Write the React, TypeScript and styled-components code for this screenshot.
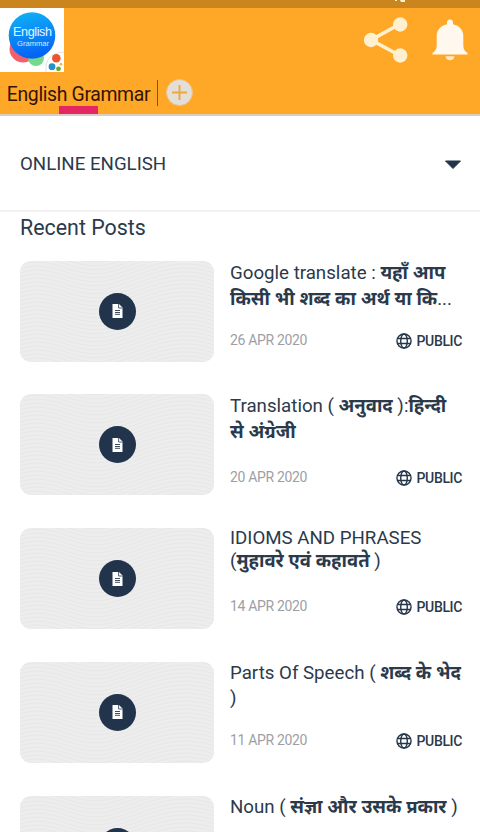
import React from "react";
import styled, { createGlobalStyle } from "styled-components";

type TitlePart = { text: string; hindi?: boolean };

type Post = {
  lines: TitlePart[][];
  lineHeight: number;
  metaGap: number;
  date?: string;
};

const posts: Post[] = [
  {
    lines: [
      [{ text: "Google translate : " }, { text: "यहाँ आप", hindi: true }],
      [{ text: "किसी भी शब्द का अर्थ या कि", hindi: true }, { text: "..." }],
    ],
    lineHeight: 26,
    metaGap: 18,
    date: "26 APR 2020",
  },
  {
    lines: [
      [
        { text: "Translation ( " },
        { text: "अनुवाद", hindi: true },
        { text: " ):" },
        { text: "हिन्दी", hindi: true },
      ],
      [{ text: "से अंग्रेजी", hindi: true }],
    ],
    lineHeight: 26,
    metaGap: 22,
    date: "20 APR 2020",
  },
  {
    lines: [
      [{ text: "IDIOMS AND PHRASES" }],
      [
        { text: "(" },
        { text: "मुहावरे एवं कहावते", hindi: true },
        { text: " )" },
      ],
    ],
    lineHeight: 23,
    metaGap: 23,
    date: "14 APR 2020",
  },
  {
    lines: [
      [{ text: "Parts Of Speech ( " }, { text: "शब्द के भेद", hindi: true }],
      [{ text: ")" }],
    ],
    lineHeight: 25,
    metaGap: 19,
    date: "11 APR 2020",
  },
  {
    lines: [
      [
        { text: "Noun ( " },
        { text: "संज्ञा और उसके प्रकार", hindi: true },
        { text: " )" },
      ],
    ],
    lineHeight: 25,
    metaGap: 20,
  },
];

const GlobalStyle = createGlobalStyle`
  * {
    box-sizing: border-box;
  }
  body {
    margin: 0;
    background: #fff;
    font-family: Roboto, "Noto Sans", sans-serif;
    color: #2b3a4b;
  }
  svg {
    display: block;
  }
`;

const Screen = styled.div`
  width: 480px;
  height: 832px;
  overflow: hidden;
  background: #fff;
`;

const StatusBar = styled.div`
  height: 8px;
  background: #ca851f;
  display: flex;
  justify-content: flex-end;
  padding-right: 74px;
`;

const Header = styled.header`
  height: 108px;
  background: #ffa726;
  border-bottom: 2px solid #d9cdc5;
  display: flex;
  flex-direction: column;
`;

const Toolbar = styled.div`
  height: 64px;
  display: flex;
  justify-content: space-between;
`;

const Actions = styled.div`
  display: flex;
  gap: 23px;
  padding: 8px 12px 0 0;
`;

const Tabs = styled.div`
  flex: 1;
  display: flex;
  align-items: flex-start;
  padding: 7px 0 0 7px;
`;

const Tab = styled.div`
  width: 143px;
  height: 35px;
  display: flex;
  flex-direction: column;
  align-items: center;
  justify-content: space-between;
  font-size: 19.4px;
  line-height: 31px;
  letter-spacing: -0.35px;
  color: #331408;
  white-space: nowrap;
`;

const TabMarker = styled.div`
  flex: none;
  width: 39px;
  height: 8px;
  margin-top: -4px;
  background: #e22762;
`;

const Divider = styled.div`
  width: 1px;
  height: 26px;
  margin: 1px 8px 0 7px;
  background: #795219;
`;

const AddButton = styled.button`
  width: 27px;
  height: 27px;
  padding: 0;
  border: 1px solid #eec287;
  border-radius: 50%;
  background: #e3ded8;
  display: flex;
  align-items: center;
  justify-content: center;
`;

const Dropdown = styled.div`
  height: 96px;
  padding: 1px 18px 0 20px;
  border-bottom: 2px solid #f3f0f1;
  display: flex;
  align-items: center;
  justify-content: space-between;
  font-size: 18.7px;
`;

const SectionTitle = styled.h2`
  margin: 0;
  height: 48.6px;
  padding: 2px 20px 0;
  font-size: 21.4px;
  font-weight: 400;
  line-height: 28px;
`;

const PostItem = styled.article`
  height: 133.75px;
  padding: 0 18px 0 20px;
  display: flex;
  gap: 16px;
`;

const Thumb = styled.div`
  flex: none;
  width: 194px;
  height: 101px;
  border-radius: 11px;
  overflow: hidden;
  background: #ededed;
  display: grid;
  place-items: center;

  > * {
    grid-area: 1 / 1;
  }
`;

const DocBadge = styled.div`
  width: 37px;
  height: 37px;
  border-radius: 50%;
  background: #21344c;
  display: flex;
  align-items: center;
  justify-content: center;
`;

const PostText = styled.div`
  flex: 1;
  min-width: 0;
`;

const Title = styled.h3<{ $lineHeight: number }>`
  margin: -1px 0 0;
  height: ${({ $lineHeight }) => $lineHeight * 2}px;
  font-size: 18.7px;
  font-weight: 400;
  line-height: ${({ $lineHeight }) => $lineHeight}px;
`;

const TitleLine = styled.div<{ $lineHeight: number }>`
  height: ${({ $lineHeight }) => $lineHeight}px;
  white-space: pre;
`;

const Hindi = styled.span`
  font-family: "Noto Sans", "Noto Sans Devanagari", sans-serif;
  font-size: 18.5px;
  font-weight: 700;
  line-height: 1;
`;

const Meta = styled.div<{ $gap: number }>`
  margin-top: ${({ $gap }) => $gap}px;
  display: flex;
  justify-content: space-between;
  line-height: 20px;
`;

const PostDate = styled.time`
  font-size: 14px;
  letter-spacing: -0.33px;
  color: #9c9fa5;
`;

const Visibility = styled.div`
  display: flex;
  align-items: center;
  gap: 5px;
  margin-top: 1px;
  height: 20px;
  font-size: 14px;
  font-weight: 500;
  letter-spacing: -0.35px;
`;

const Logo = () => (
  <svg width="64" height="64" viewBox="0 0 64 64">
    <defs>
      <linearGradient id="logoBlue" x1="0" y1="0" x2="0.2" y2="1">
        <stop offset="0" stopColor="#10b5f6" />
        <stop offset="1" stopColor="#0564f5" />
      </linearGradient>
    </defs>
    <rect width="64" height="64" fill="#fff" />
    <circle cx="23" cy="41" r="13.5" fill="#f3606b" />
    <circle cx="36" cy="50" r="8" fill="#75d98a" />
    <circle cx="32" cy="27.5" r="23.3" fill="url(#logoBlue)" />
    <text x="13" y="28" fontSize="12.6" textLength="39" fill="#e5f6ff" fontFamily="Liberation Sans, sans-serif">
      English
    </text>
    <text x="17" y="38" fontSize="7.6" textLength="32" fill="#d5ebff" fontFamily="Liberation Sans, sans-serif">
      Grammar
    </text>
    <path d="M46 64C45 51 51 45 64 44V64z" fill="#fff" />
    <path d="M46 64C45 51 51 45 64 44" fill="none" stroke="#d5dbe0" strokeWidth="0.8" />
    <circle cx="56.3" cy="50.3" r="4.3" fill="#ea552b" />
    <circle cx="52" cy="58.7" r="3.4" fill="#288fc8" />
    <circle cx="58.5" cy="60.8" r="2.4" fill="#62a834" />
    <circle cx="61" cy="56.2" r="1.3" fill="#e9b43a" />
  </svg>
);

const ShareIcon = () => (
  <svg width="46" height="48" viewBox="0 0 46 48" fill="#fff0cf">
    <path d="M37 8L8 24L37 39.5" fill="none" stroke="#fff0cf" strokeWidth="3.6" />
    <circle cx="37.2" cy="8.5" r="7.2" />
    <circle cx="8" cy="24" r="7.2" />
    <circle cx="37.2" cy="39.5" r="7.2" />
  </svg>
);

const BellIcon = () => (
  <svg width="36" height="48" viewBox="0 0 36 48" fill="#fff8ef">
    <path d="M18 3.500c-1.900 0-3 1.300-3 3v1.700C8.500 9.500 4.700 14 4.700 20v9.500C4.700 33 3.500 34.800.5 37v1.500h35V37c-3-2.200-4.200-4-4.200-7.500V20c0-6-3.800-10.500-10.300-11.800V6.500c0-1.700-1.100-3-3-3z" />
    <path d="M13.500 40.300h9c-.4 2.400-2 4-4.500 4s-4.100-1.600-4.500-4z" fill="#ffeac7" />
  </svg>
);

const PlusIcon = () => (
  <svg width="17" height="17" viewBox="0 0 17 17">
    <path d="M8.500 1v15M1 8.500h15" stroke="#eda83c" strokeWidth="1.900" />
  </svg>
);

const WavePattern = () => (
  <svg width="194" height="101" viewBox="0 0 194 101" fill="none">
    {Array.from({ length: 38 }, (_, i) => {
      const y = i * 4 - 24;
      return (
        <path
          key={i}
          d={`M0 ${y + 8}C35 ${y - 4} 56 ${y + 26} 94 ${y + 14}S155 ${y - 13} 194 ${y}`}
          stroke="#e6e6e6"
          strokeWidth="0.8"
        />
      );
    })}
  </svg>
);

const DocIcon = () => (
  <svg width="11" height="14" viewBox="0 0 11 14">
    <path d="M.5 0H7l3.500 3.500V14H.5z" fill="#fff" />
    <path d="M6.600 0v4h4" fill="none" stroke="#21344c" strokeWidth="0.8" />
    <path d="M3 6.500h5M3 8.500h5M3 10.300h5" stroke="#3d4e62" strokeWidth="1" />
  </svg>
);

const GlobeIcon = () => (
  <svg width="16" height="16" viewBox="0 0 17 17" fill="none" stroke="#26374a" strokeWidth="1.500">
    <circle cx="8.500" cy="8.500" r="7.500" />
    <ellipse cx="8.500" cy="8.500" rx="3.500" ry="7.500" />
    <path d="M1.800 5.800h13.400M1.800 11.200h13.400" />
  </svg>
);

const PostTitle = ({ post }: { post: Post }) => (
  <Title $lineHeight={post.lineHeight}>
    {post.lines.map((line, i) => (
      <TitleLine key={i} $lineHeight={post.lineHeight}>
        {line.map((part, j) =>
          part.hindi ? <Hindi key={j}>{part.text}</Hindi> : part.text
        )}
      </TitleLine>
    ))}
  </Title>
);

export default function App() {
  return (
    <>
      <GlobalStyle />
      <Screen>
        <StatusBar>
          <svg width="12" height="2" viewBox="0 0 12 2">
            <path d="M1 0h2v1H1zM6 0h5v2H7z" fill="#fff0d0" />
          </svg>
        </StatusBar>
        <Header>
          <Toolbar>
            <Logo />
            <Actions>
              <ShareIcon />
              <BellIcon />
            </Actions>
          </Toolbar>
          <Tabs>
            <Tab>
              English Grammar
              <TabMarker />
            </Tab>
            <Divider />
            <AddButton type="button">
              <PlusIcon />
            </AddButton>
          </Tabs>
        </Header>
        <Dropdown>
          ONLINE ENGLISH
          <svg width="18" height="14" viewBox="0 0 18 14">
            <path d="M1.500 4h15L9 11.500z" fill="#21344c" stroke="#21344c" strokeLinejoin="round" />
          </svg>
        </Dropdown>
        <SectionTitle>Recent Posts</SectionTitle>
        {posts.map((post, i) => (
          <PostItem key={i}>
            <Thumb>
              <WavePattern />
              <DocBadge>
                <DocIcon />
              </DocBadge>
            </Thumb>
            <PostText>
              <PostTitle post={post} />
              {post.date && (
                <Meta $gap={post.metaGap}>
                  <PostDate>{post.date}</PostDate>
                  <Visibility>
                    <GlobeIcon />
                    PUBLIC
                  </Visibility>
                </Meta>
              )}
            </PostText>
          </PostItem>
        ))}
      </Screen>
    </>
  );
}
